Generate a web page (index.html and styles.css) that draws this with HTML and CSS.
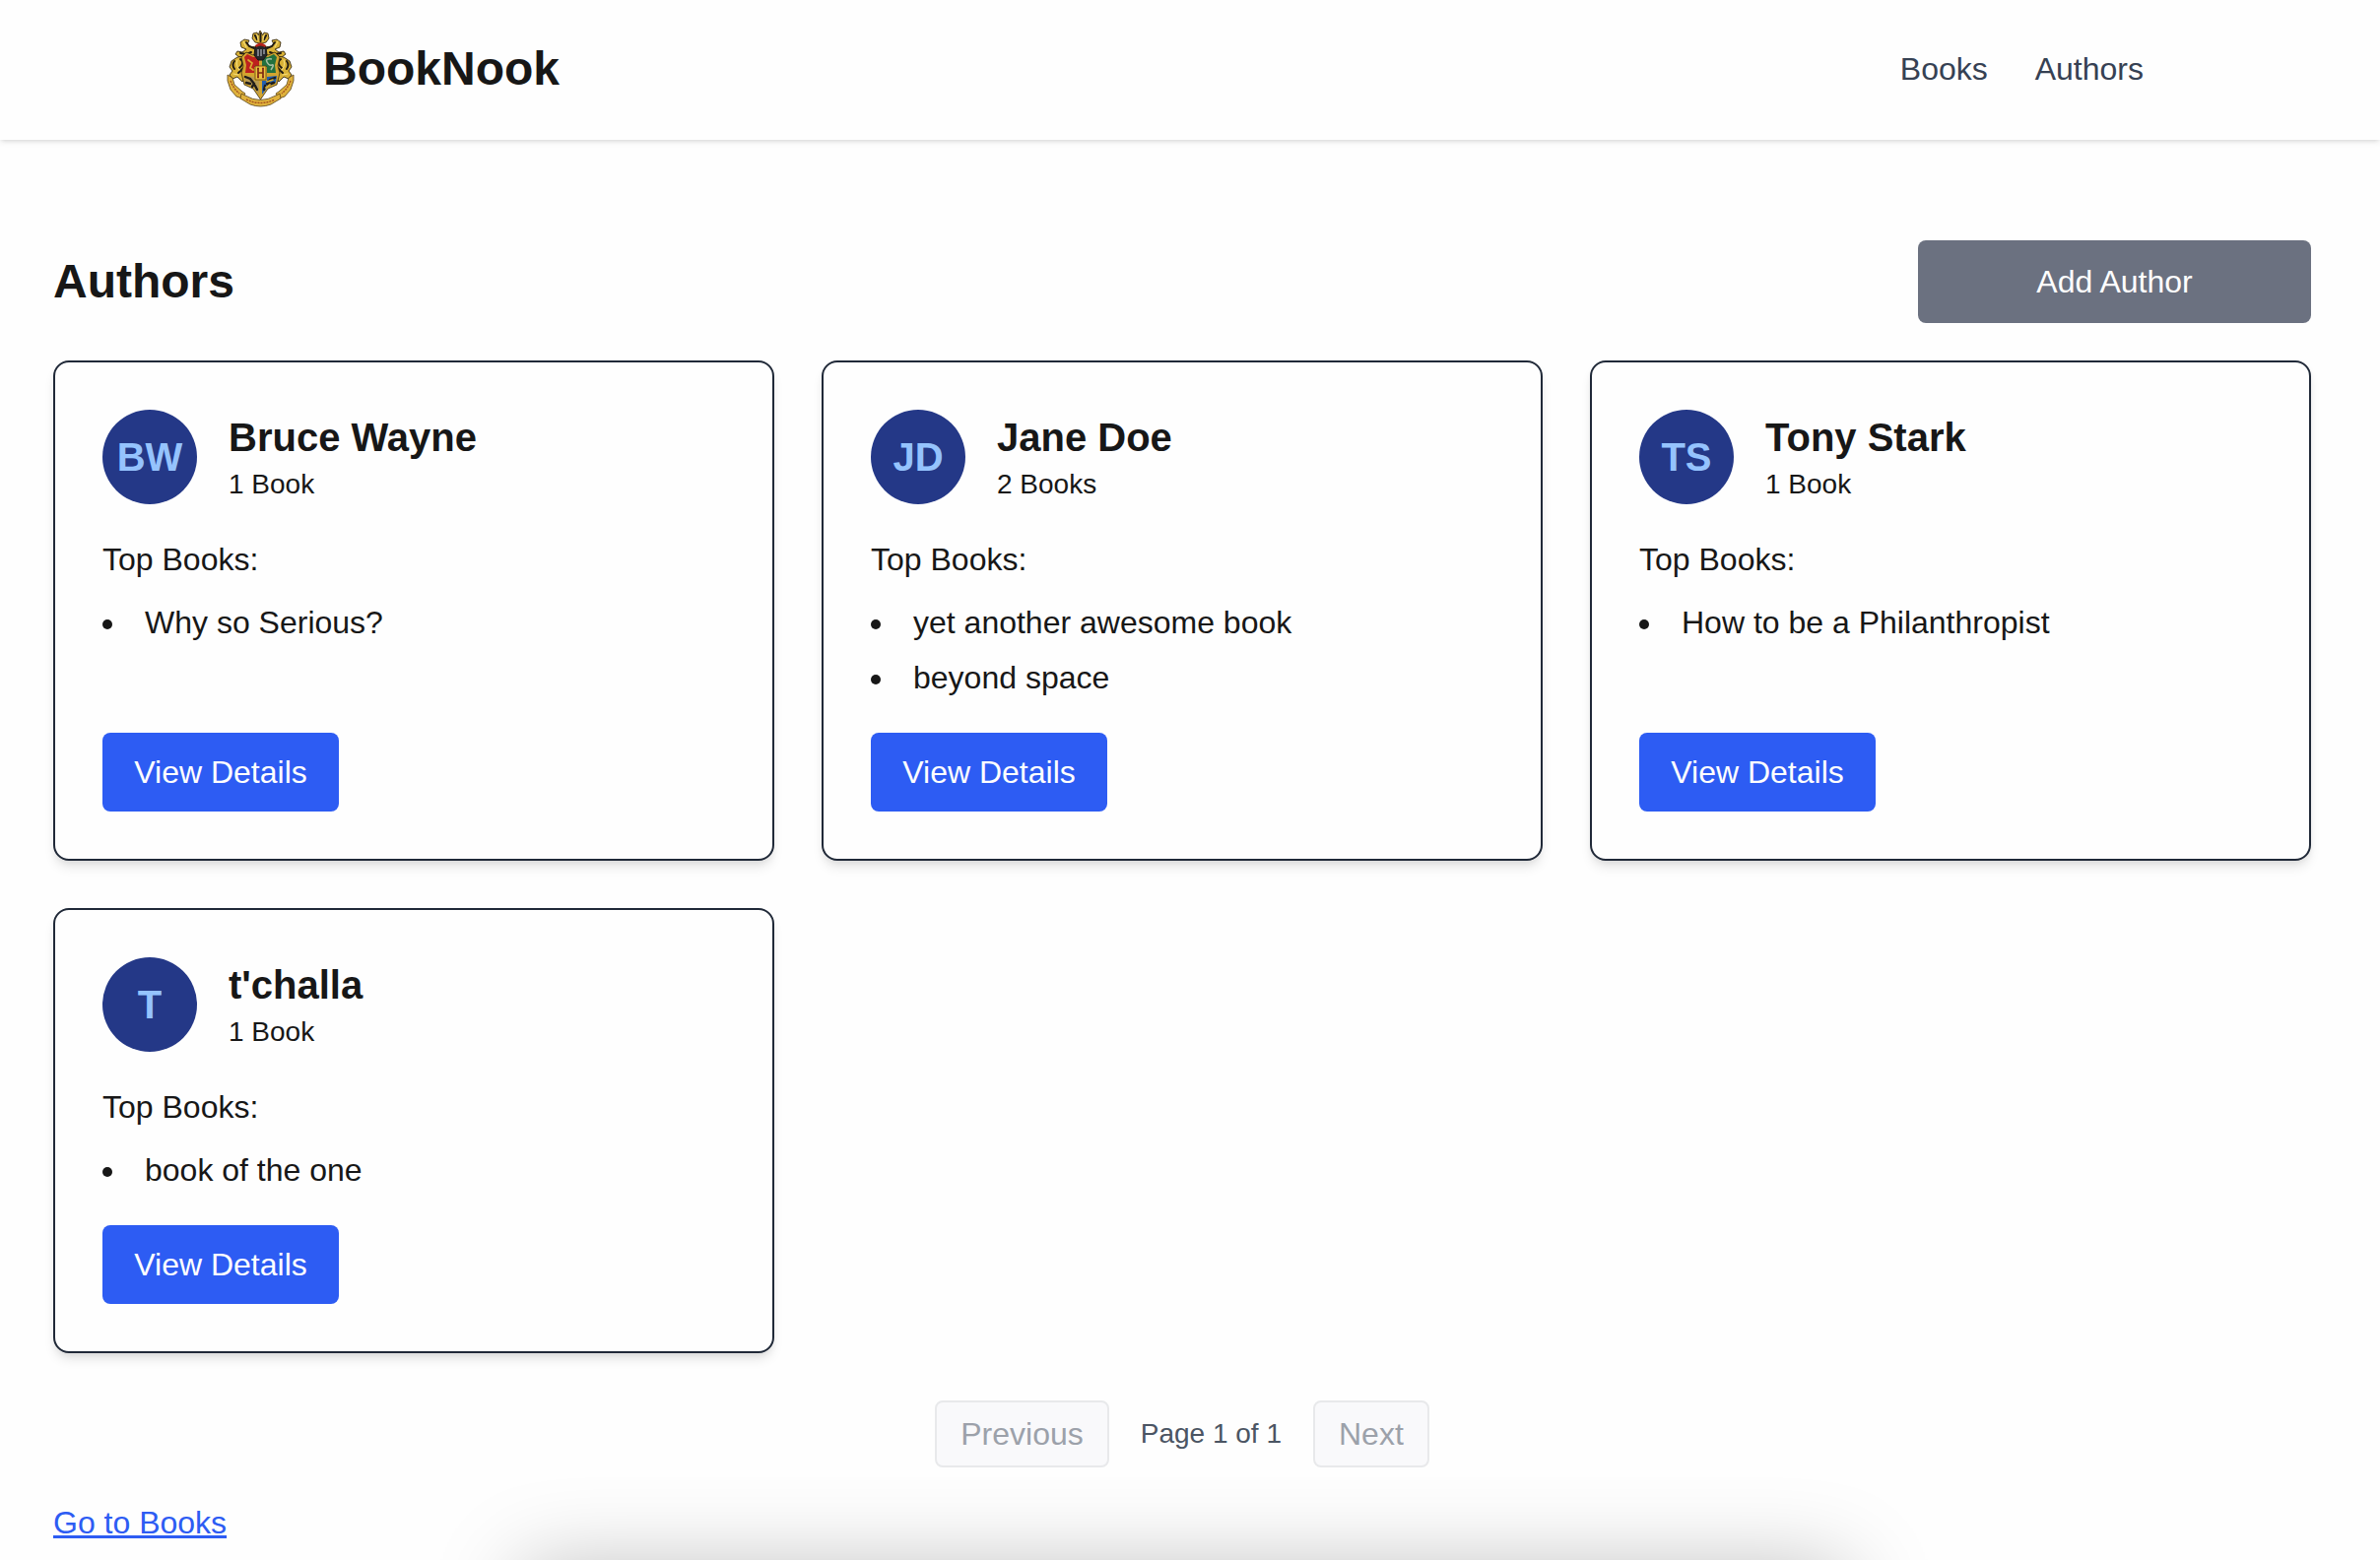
FILE: index.html
```html
<!DOCTYPE html>
<html lang="en">
<head>
<meta charset="utf-8">
<title>BookNook</title>
<link rel="stylesheet" href="styles.css">
</head>
<body>
<div class="page">
  <header class="site-header">
    <div class="header-inner">
      <a class="brand" href="#">
        <svg class="crest" viewBox="0 0 80 80" aria-hidden="true">
          <!-- plume and mantling -->
          <g fill="#d8b136" stroke="#3b2d10" stroke-width=".9" stroke-linejoin="round">
            <path d="M40 14l-5-1-3-4 1-5 4-1 1 3 2-5 3 5 1-3 4 1 1 5-3 4-4 1z"/>
            <path d="M36 17l-5 1-4-3 2-4-5-1-4 3 1 5 5 2-4 3-5-1-2 3 4 3 10 2 7-6zM45 17l5 1 4-3-2-4 5-1 4 3-1 5-5 2 4 3 5-1 2 3-4 3-10 2-7-6z"/>
            <path d="M24 27l-7 1-6 4-2 6 3 4-3 4 3 4 5-2 5 5 6-9zM57 27l7 1 6 4 2 6-3 4 3 4-3 4-5-2-5 5-6-9z"/>
          </g>
          <g fill="none" stroke="#201b14" stroke-width="2" stroke-linecap="round">
            <path d="M35 6l2 4M46 6l-2 4M40.500 4v8M26 13l3 4 5 2M55 13l-3 4-5 2M20 24l6 1 5-2M61 24l-6 1-5-2"/>
            <path d="M14 32q-3 4 0 8M20 30q5 4-1 9M23 39l-5 5M67 32q3 4 0 8M61 30q-5 4 1 9M58 39l5 5"/>
          </g>
          <g fill="none" stroke="#f4dc79" stroke-width="1.100" stroke-linecap="round">
            <path d="M37 5l1 6M44 5l-1 6M23 12l3 6M58 12l-3 6M17 31q-2 6 2 10M64 31q2 6-2 10M13 45l5 1M68 45l-5 1"/>
          </g>
          <!-- quartered shield -->
          <path fill="#d3a52f" stroke="#3b2d10" stroke-width=".8" d="M21 28l5-5 7 3 7.500-2 7.500 2 7-3 5 5-2 9 2 7-3 12-9 4-7.500 11-7.500-11-9-4-3-12 2-7z"/>
          <path fill="#bd211e" d="M24 28l3-3 6 3 6-1v11h-5v6h-9l1-8z"/>
          <path fill="#22713f" d="M57 28l-3-3-6 3-6-1v11h5v6h9l-1-8z"/>
          <path fill="#b89b53" d="M24 47l10 1v4h5v14l-6-8-8-4z"/>
          <path fill="#235fae" d="M57 47l-10 1v4h-5v14l6-8 8-4z"/>
          <path fill="none" stroke="#a6bea3" stroke-width="1.500" d="M52 30q-7-1-5 3t5 3-1 5"/>
          <g fill="none" stroke="#211e1b" stroke-width="2.400" stroke-linecap="round">
            <path d="M25 48l5 2 4 5-2 3M26 54l4 1M35 57l2 4M55 49l-5 2-3 4M54 54l-6 2M45 57l-1 4"/>
          </g>
          <path fill="none" stroke="#d9ae32" stroke-width="1.700" stroke-linecap="round" d="M28 31l4 3-2 5 3 2M47 53l6-2M46 59l4-3"/>
          <!-- helmet -->
          <path fill="#25272b" stroke="#151619" d="M35 18q5.500-6 11 0l1 8-4 5h-5l-4-5z"/>
          <path fill="#b5221b" d="M35 16q5.500-5 11 0l-1 2q-4.500-3-9 0z"/>
          <path stroke="#a8adb7" stroke-width="1.300" d="M38 20v7M41 20v7M44 20v5"/>
          <path fill="#edc13f" stroke="#604312" stroke-width=".8" d="M35 37h11v14H35z"/>
          <path fill="none" stroke="#7e2914" stroke-width="1.700" d="M38 39.500v9M43 39.500v9M37 39.500h2M42 39.500h2M37 48.500h2M42 48.500h2M38 44h5"/>
          <!-- banner -->
          <g fill="#dfb23c" stroke="#5b4315" stroke-width=".8" stroke-linejoin="round">
            <path d="M7 46l5 3 2 7 8 7 3 2-3 5-6-2-6-7-3-9zM74 46l-5 3-2 7-8 7-3 2 3 5 6-2 6-7 3-9z"/>
            <path d="M21 65l4 2q15 9 31 0l4-2 1 5-5 3-5 3q-10.500 4-21 0l-5-3-5-3z"/>
          </g>
          <path fill="none" stroke="#a65620" stroke-width="1.500" stroke-dasharray="2 1" d="M10 52q3 8 9 13M26 71q14.500 7 29 0M71 52q-3 8-9 13"/>
        </svg>
        <span>BookNook</span>
      </a>
      <nav class="nav"><a href="#">Books</a><a href="#">Authors</a></nav>
    </div>
  </header>

  <main class="content">
    <div class="title-row">
      <h1>Authors</h1>
      <button class="add-button">Add Author</button>
    </div>

    <section class="author-grid">
      <article class="card">
        <div class="author"><div class="avatar">BW</div><div><h2>Bruce Wayne</h2><p class="count">1 Book</p></div></div>
        <p class="label">Top Books:</p>
        <ul class="books"><li>Why so Serious?</li></ul>
        <a class="details" href="#">View Details</a>
      </article>
      <article class="card">
        <div class="author"><div class="avatar">JD</div><div><h2>Jane Doe</h2><p class="count">2 Books</p></div></div>
        <p class="label">Top Books:</p>
        <ul class="books"><li>yet another awesome book</li><li>beyond space</li></ul>
        <a class="details" href="#">View Details</a>
      </article>
      <article class="card">
        <div class="author"><div class="avatar">TS</div><div><h2>Tony Stark</h2><p class="count">1 Book</p></div></div>
        <p class="label">Top Books:</p>
        <ul class="books"><li>How to be a Philanthropist</li></ul>
        <a class="details" href="#">View Details</a>
      </article>
      <article class="card">
        <div class="author"><div class="avatar">T</div><div><h2>t'challa</h2><p class="count">1 Book</p></div></div>
        <p class="label">Top Books:</p>
        <ul class="books"><li>book of the one</li></ul>
        <a class="details" href="#">View Details</a>
      </article>
    </section>

    <div class="pagination">
      <button class="page-button" disabled>Previous</button>
      <span class="page-status">Page 1 of 1</span>
      <button class="page-button" disabled>Next</button>
    </div>
    <a class="books-link" href="#">Go to Books</a>
  </main>
  <div class="dock-shadow"></div>
</div>
</body>
</html>
```

FILE: styles.css
```css
* { box-sizing: border-box; margin: 0; padding: 0; }

body {
  background: #fefefe;
  color: #171717;
  font: 32px/48px "Liberation Sans", Arial, sans-serif;
}

a { color: inherit; text-decoration: none; }
button { font: inherit; border: 0; }

.page {
  position: relative;
  height: 1584px;
  padding-right: 16px;
  overflow: hidden;
}

.site-header {
  height: 142px;
  margin-right: -16px;
  padding-right: 16px;
  background: #fefefe;
  box-shadow: 0 2px 6px rgba(0, 0, 0, .1), 0 2px 4px -2px rgba(0, 0, 0, .1);
}

.header-inner {
  display: flex;
  align-items: center;
  justify-content: space-between;
  height: 140px;
  padding: 0 224px;
}

.brand {
  display: flex;
  align-items: center;
  gap: 24px;
  font-size: 48px;
  line-height: 64px;
  font-weight: 700;
}

.crest { width: 80px; height: 80px; }

.nav { display: flex; gap: 48px; color: #364153; }

.content { padding: 102px 54px 0; }

.title-row {
  display: flex;
  align-items: center;
  justify-content: space-between;
  margin-bottom: 38px;
}

h1 { font-size: 48px; line-height: 64px; }

.add-button {
  width: 399px;
  height: 84px;
  border-radius: 8px;
  background: #6b7180;
  color: #fefefe;
}

.author-grid {
  display: grid;
  grid-template-columns: repeat(3, 1fr);
  gap: 48px;
}

.card {
  display: flex;
  flex-direction: column;
  padding: 48px;
  border: 2px solid #202938;
  border-radius: 16px;
  background: #fefefe;
  box-shadow: 0 8px 12px -2px rgba(0, 0, 0, .1), 0 4px 8px -4px rgba(0, 0, 0, .1);
}

.author { display: flex; align-items: center; gap: 32px; margin-bottom: 32px; }

.avatar {
  display: grid;
  place-items: center;
  width: 96px;
  height: 96px;
  border-radius: 50%;
  background: #243887;
  color: #95c3fd;
  font-size: 40px;
  font-weight: 700;
}

h2 { font-size: 40px; line-height: 56px; }
.count { font-size: 28px; line-height: 40px; }
.label { margin-bottom: 16px; }

.books {
  display: flex;
  flex-direction: column;
  gap: 8px;
  margin-bottom: 32px;
  list-style: none;
}

.books li { display: flex; align-items: center; gap: 33px; }

.books li::before {
  content: "";
  width: 10px;
  height: 10px;
  margin-top: 4px;
  border-radius: 50%;
  background: #171717;
}

.details {
  align-self: flex-start;
  width: 240px;
  margin-top: auto;
  padding: 16px 0;
  border-radius: 8px;
  background: #2d5cf3;
  color: #fefefe;
  text-align: center;
}

.pagination {
  display: flex;
  align-items: center;
  justify-content: center;
  gap: 32px;
  margin: 48px 0 32px;
}

.page-button {
  padding: 8px 24px;
  border: 2px solid #e8e9eb;
  border-radius: 8px;
  background: #f9f9fb;
  color: #9ca1aa;
}

.page-status { font-size: 28px; line-height: 40px; color: #4b5563; }

.books-link {
  color: #2d5cf3;
  text-decoration: underline;
}

/* Soft shadow rising from below the window's bottom edge */
.dock-shadow {
  position: absolute;
  top: 1592px;
  left: 530px;
  width: 1344px;
  height: 200px;
  box-shadow: 0 0 88px rgba(0, 0, 0, .26);
}
```
